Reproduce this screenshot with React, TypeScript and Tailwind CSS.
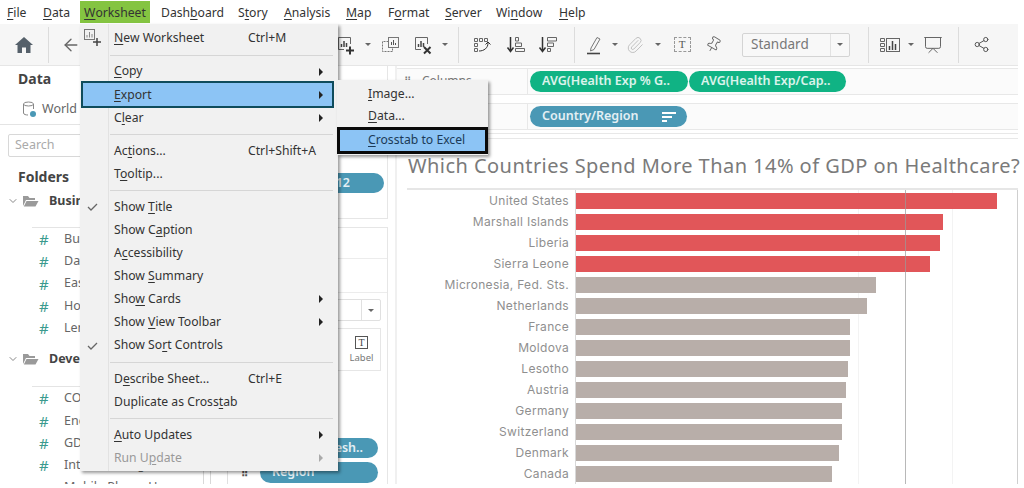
import { ArrowLeft, ChevronDown, Paperclip, Pin, Presentation, Share2 } from "lucide-react";
import type { ReactNode } from "react";

// "&" marks the underlined mnemonic letter
const Mn = ({ text }: { text: string }) => {
  const i = text.indexOf("&");
  if (i < 0) return <>{text}</>;
  return (
    <>
      {text.slice(0, i)}
      <u className="underline-offset-2">{text[i + 1]}</u>
      {text.slice(i + 2)}
    </>
  );
};

const topMenus = [
  { label: "&File", w: "w-[36px]" },
  { label: "&Data", w: "w-[37px]" },
  { label: "&Worksheet", w: "w-[70px] mr-[11px] justify-center bg-[#84c441]" },
  { label: "Dash&board", w: "w-[77px]" },
  { label: "S&tory", w: "w-[46px]" },
  { label: "&Analysis", w: "w-[62px]" },
  { label: "&Map", w: "w-[42px]" },
  { label: "F&ormat", w: "w-[57px]" },
  { label: "&Server", w: "w-[51px]" },
  { label: "Wi&ndow", w: "w-[63px]" },
  { label: "&Help", w: "w-[40px]" },
];

type MenuEntry = {
  label?: string;
  shortcut?: string;
  arrow?: boolean;
  check?: boolean;
  active?: boolean;
  disabled?: boolean;
  icon?: boolean;
  sep?: boolean;
};

const worksheetMenu: MenuEntry[] = [
  { label: "&New Worksheet", shortcut: "Ctrl+M", icon: true },
  { sep: true },
  { label: "&Copy", arrow: true },
  { label: "&Export", arrow: true, active: true },
  { label: "C&lear", arrow: true },
  { sep: true },
  { label: "Ac&tions...", shortcut: "Ctrl+Shift+A" },
  { label: "T&ooltip..." },
  { sep: true },
  { label: "Show &Title", check: true },
  { label: "Show C&aption" },
  { label: "A&ccessibility" },
  { label: "Show &Summary" },
  { label: "Sho&w Cards", arrow: true },
  { label: "Show &View Toolbar", arrow: true },
  { label: "Show So&rt Controls", check: true },
  { sep: true },
  { label: "D&escribe Sheet...", shortcut: "Ctrl+E" },
  { label: "Duplicate as Cross&tab" },
  { sep: true },
  { label: "&Auto Updates", arrow: true },
  { label: "Run U&pdate", arrow: true, disabled: true },
];

const bars = [
  { name: "United States", end: 997, red: true },
  { name: "Marshall Islands", end: 943, red: true },
  { name: "Liberia", end: 940, red: true },
  { name: "Sierra Leone", end: 930, red: true },
  { name: "Micronesia, Fed. Sts.", end: 876 },
  { name: "Netherlands", end: 867 },
  { name: "France", end: 850 },
  { name: "Moldova", end: 850 },
  { name: "Lesotho", end: 848 },
  { name: "Austria", end: 846 },
  { name: "Germany", end: 842 },
  { name: "Switzerland", end: 842 },
  { name: "Denmark", end: 839 },
  { name: "Canada", end: 832 },
];

const Caret = () => <span className="h-0 w-0 shrink-0 border-x-[3px] border-t-[3px] border-x-transparent border-t-[#666]" />;

const Divider = () => <span className="block h-[36px] w-px bg-[#dcdcdc]" />;

const Slot = ({ w, children }: { w: string; children?: ReactNode }) => (
  <span className={`flex shrink-0 items-center justify-center ${w}`}>{children}</span>
);

const HomeIcon = () => (
  <svg width="18" height="16" viewBox="0 0 18 16" fill="#55606a">
    <path d="M9 0 L18 8 L15.5 8 L15.5 16 L11 16 L11 10.5 L7 10.5 L7 16 L2.5 16 L2.5 8 L0 8 Z" />
  </svg>
);

const ChartBox = ({ mark }: { mark?: "plus" | "x" }) => (
  <svg width="22" height="20" viewBox="0 0 22 20" fill="none" stroke="#666">
    <path d="M4.5 2.5 H16.5 V9 M4.5 2.5 V14.5 H10" />
    <path d="M7.5 12 V9 M10 12 V6 M12.5 12 V8" stroke="#444" strokeWidth="1.5" />
    {mark === "plus" && <path d="M12 15.5 H20 M16 11.5 V19.5" stroke="#333" strokeWidth="2" />}
    {mark === "x" && <path d="M13 12 L19.5 18.5 M19.5 12 L13 18.5" stroke="#333" strokeWidth="2" />}
  </svg>
);

const DuplicateChart = () => (
  <svg width="20" height="20" viewBox="0 0 20 20" fill="none" stroke="#777">
    <rect x="8.5" y="2.5" width="10" height="10" />
    <path d="M8.5 6.5 H2.5 V16.5 H12.5 V12.5" strokeDasharray="2 1" />
    <path d="M11.5 10 V7 M13.5 10 V5 M15.5 10 V8" stroke="#555" />
  </svg>
);

const SwapIcon = () => (
  <svg width="20" height="20" viewBox="0 0 20 20" fill="none" stroke="#666">
    <path d="M2.5 3.5 h3 v3 h-3 z M7.5 3.5 h3 v3 h-3 z M12.5 3.5 h3 v3 h-3 z M2.5 8.5 h3 v3 h-3 z M2.5 13.5 h3 v3 h-3 z" />
    <path d="M7 16 C12 16 16 13 16 8" stroke="#333" />
    <path d="M13.5 9.5 L16 7 L18.5 9.5" stroke="#333" />
  </svg>
);

const SortIcon = ({ desc }: { desc?: boolean }) => (
  <svg width="20" height="20" viewBox="0 0 20 20" fill="none" stroke="#666">
    <path d="M4.5 2 V16 M1.5 12.5 L4.5 16.5 L7.5 12.5" stroke="#333" strokeWidth="1.5" />
    {desc ? (
      <path d="M9.5 2.5 h9 v3.5 h-9 z M9.5 8 h6 v3.5 h-6 z M9.5 13.5 h3 v3 h-3 z" />
    ) : (
      <path d="M9.5 2.5 h3 v3.5 h-3 z M9.5 8 h6 v3.5 h-6 z M9.5 13.5 h9 v3 h-9 z" />
    )}
  </svg>
);

const PenIcon = () => (
  <svg width="18" height="20" viewBox="0 0 18 20" fill="none" stroke="#777">
    <path d="M5 13 L11 2.5 L14 4 L8 14.5 L4.5 16 Z" />
    <path d="M1 18.5 H14" stroke="#444" strokeWidth="1.6" />
  </svg>
);

const ShowMeIcon = () => (
  <svg width="22" height="18" viewBox="0 0 22 18" fill="none" stroke="#666">
    <path d="M1.5 2.5 h4 v3 h-4 z M1.5 7.5 h4 v3 h-4 z M1.5 12.5 h4 v3 h-4 z" />
    <rect x="7.5" y="2.5" width="13" height="13" />
    <path d="M10.5 14 V10 M13.5 14 V5 M16.5 14 V8" stroke="#444" strokeWidth="1.5" />
  </svg>
);

const Pill = ({ text, cls, children }: { text: string; cls: string; children?: ReactNode }) => (
  <div className={`flex h-[20px] items-center rounded-full text-[12.5px] font-semibold text-white/85 ${cls}`}>
    <span className="truncate">{text}</span>
    {children}
  </div>
);

const FieldRow = ({ name }: { name: string }) => (
  <div className="flex h-[22.3px] items-center pl-[39px] text-[12.5px] text-[#666]">
    <span className="w-[25px] text-[15px] text-[#3a9a8e]">#</span>
    <span className="whitespace-nowrap">{name}</span>
  </div>
);

const FolderHead = ({ name }: { name: string }) => (
  <div className="flex h-[26px] items-center gap-[3px] pl-[7px] text-[12.5px] font-bold text-[#444]">
    <ChevronDown size={12} color="#888" />
    <svg width="17" height="12" viewBox="0 0 17 12" fill="#9a9a9a">
      <path d="M1 1 H6 L7.5 3 H13 V5 H4 L1 11 Z M4.5 6 H16.5 L13.5 11.5 H1.8 Z" />
    </svg>
    <span className="ml-[7px]">{name}</span>
  </div>
);

const DataPane = () => (
  <aside className="h-full w-[203px] shrink-0 overflow-hidden">
    <div className="flex h-[23px] items-end pl-[18px] text-[14px] font-bold text-[#444]">Data</div>
    <div className="flex h-[36px] items-center gap-[5px] border-b border-[#e4e4e4] pl-[22px] pt-[5px] text-[12.5px] text-[#666]">
      <svg width="15" height="17" viewBox="0 0 15 17" fill="none" stroke="#888">
        <ellipse cx="6.5" cy="3" rx="5" ry="2" />
        <path d="M1.5 3 V12 C1.5 13.5 4 14 6 14 M11.5 3 V8" />
        <circle cx="11" cy="13" r="3" fill="#4a98b5" stroke="none" />
      </svg>
      <span className="whitespace-nowrap">World Indicators</span>
    </div>
    <div className="mx-[8px] mt-[9px] flex h-[23px] items-center rounded-[2px] border border-[#d8d8d8] pl-[6px] text-[12.5px] text-[#aaa]">
      Search
    </div>
    <div className="mt-[10px] pl-[18px] text-[14px] font-bold leading-[20px] text-[#444]">Folders</div>
    <div className="mt-[1px]">
      <FolderHead name="Business" />
    </div>
    <div className="ml-[32px] mt-[13px] h-px bg-[#e4e4e4]" />
    <FieldRow name="Business Tax Rate" />
    <FieldRow name="Days to Start Business" />
    <FieldRow name="Ease of Business" />
    <FieldRow name="Hours to do Tax" />
    <FieldRow name="Lending Interest" />
    <div className="mt-[7px]">
      <FolderHead name="Development" />
    </div>
    <div className="ml-[32px] mt-[14px] h-px bg-[#e4e4e4]" />
    <FieldRow name="CO2 Emissions" />
    <FieldRow name="Energy Usage" />
    <FieldRow name="GDP" />
    <FieldRow name="Internet Usage" />
    <FieldRow name="Mobile Phone Usage" />
  </aside>
);

const CardsPane = () => (
  <div className="ml-[16px] flex h-full w-[161px] shrink-0 flex-col border-l border-[#e0e0e0]">
    <div className="h-[153px] shrink-0 border-b border-r border-[#e6e6e6] pl-[8px] pr-[3px] pt-[107px]">
      <Pill text="YEAR(Year): 2012" cls="justify-end bg-[#4a98b5] pr-[34px]" />
    </div>
    <div className="mt-[8px] flex flex-1 flex-col border-r border-t border-[#e6e6e6]">
      <div className="h-[31px] shrink-0 border-b border-[#ececec]" />
      <div className="h-[34px] shrink-0 border-b border-[#ececec]" />
      <div className="ml-auto mr-[6px] mt-[6px] flex h-[22px] w-[150px] shrink-0 justify-end rounded-[2px] border border-[#e0e0e0]">
        <span className="flex w-[19px] items-center justify-center border-l border-[#e0e0e0]">
          <Caret />
        </span>
      </div>
      <div className="ml-auto mr-[6px] mt-[7px] flex h-[43px] w-[150px] shrink-0 justify-end border border-[#e6e6e6]">
        <div className="flex w-[37px] flex-col items-center justify-center gap-[4px] text-[9.5px] text-[#777]">
          <span className="flex h-[13px] w-[13px] items-center justify-center border border-[#555] font-['Liberation_Serif'] text-[10px] leading-none text-[#444]">
            T
          </span>
          <span className="leading-none">Label</span>
        </div>
      </div>
      <div className="ml-[33px] mr-[9px] mt-[67px]">
        <Pill text="Pop. Fresh.." cls="justify-end bg-[#4a98b5] pr-[15px]" />
      </div>
      <div className="ml-[13px] mr-[9px] mt-[4px] flex items-center gap-[4px]">
        <span className="w-[15px] text-[10px] font-bold leading-none tracking-[1px] text-[#555]">⠿</span>
        <div className="flex-1">
          <Pill text="Region" cls="h-[21px] bg-[#4a98b5] pl-[12px]" />
        </div>
      </div>
    </div>
  </div>
);

const Shelf = ({ label, children }: { label: string; children: ReactNode }) => (
  <div className="flex h-[27px] items-center border-y border-[#e8e8e8] bg-[#fbfbfb]">
    <div className="flex h-full w-[131px] shrink-0 items-start gap-[11px] border-r border-[#e8e8e8] pl-[7px] pt-[3px] text-[12px] text-[#777]">
      <span className="text-[10px] leading-[16px]">⠿</span>
      {label}
    </div>
    <div className="flex items-center gap-px pl-[2px]">{children}</div>
  </div>
);

const Chart = () => (
  <div className="relative ml-[10px] mt-[8px] border-t-2 border-[#e6e6e6]">
    <div className="absolute bottom-0 left-[451px] top-0 w-px bg-[#f3f3f3]" />
    <div className="absolute bottom-0 left-[545px] top-0 w-px bg-[#f3f3f3]" />
    <div className="absolute bottom-0 right-0 top-0 w-px bg-[#cfcfcf]" />
    {bars.map((b) => (
      <div key={b.name} className="relative flex h-[21px] items-center">
        <span className="w-[168px] shrink-0 whitespace-nowrap pr-[6px] text-right font-['Inter',sans-serif] text-[12px] tracking-[0.3px] text-[#8f8f8f]">
          {b.name}
        </span>
        <div className="flex h-full flex-1 items-center border-l border-[#d8d8d8]">
          <div
            className={`h-[16px] ${b.red ? "bg-[#e15659]" : "bg-[#b8aea9]"}`}
            style={{ width: b.end - 576 }}
          />
        </div>
      </div>
    ))}
    <div className="absolute bottom-0 left-[498px] top-0 w-px bg-[#9a9a9a]/70" />
  </div>
);

const MenuRow = ({ item }: { item: MenuEntry }) => (
  <div
    className={`relative flex items-center ${item.disabled ? "text-[#999]" : "text-[#333]"} ${
      item.active
        ? "z-10 -my-[2px] ml-[1px] h-[27px] w-[253px] shrink-0 border-2 border-[#0f4c5c] bg-[#8cc4f5] pl-[31px] pr-[9px] text-[#1b3a57]"
        : "h-[23.1px] shrink-0 pl-[34px] pr-[15px]"
    }`}
  >
    {item.icon && (
      <svg className="absolute left-[3px] top-[1px]" width="20" height="18" viewBox="0 0 20 18" fill="none" stroke="#777">
        <rect x="1.5" y="1.5" width="10" height="10" />
        <path d="M4 9.5 V7 M6.5 9.5 V4 M9 9.5 V6" stroke="#888" />
        <path d="M10 14 H18 M14 10 V18" stroke="#444" strokeWidth="1.5" />
      </svg>
    )}
    {item.check && (
      <svg className="absolute left-[7px] top-[8px]" width="11" height="8" viewBox="0 0 11 8" fill="none" stroke="#666" strokeWidth="1.3">
        <path d="M1 4 L4 7 L10 1" />
      </svg>
    )}
    <span className="w-[134px] shrink-0 whitespace-nowrap">
      <Mn text={item.label ?? ""} />
    </span>
    {item.shortcut && <span className="whitespace-nowrap">{item.shortcut}</span>}
    {item.arrow && (
      <span
        className={`ml-auto h-0 w-0 border-y-[4px] border-l-[4px] border-y-transparent ${
          item.disabled ? "border-l-[#aaa]" : "border-l-[#222]"
        }`}
      />
    )}
  </div>
);

const WorksheetMenu = () => (
  <div className="absolute left-[80px] top-[24px] flex h-[447px] w-[258px] flex-col bg-[#f1f1f1] pt-[3px] text-[12.2px] shadow-[2px_2px_3px_rgba(0,0,0,0.4)]">
    <div className="absolute bottom-0 left-[28px] top-0 w-px bg-[#e2e2e2]" />
    {worksheetMenu.map((item, i) =>
      item.sep ? (
        <div key={i} className="relative my-[4.5px] ml-[30px] mr-[5px] h-px shrink-0 bg-[#d6d6d6]" />
      ) : (
        <MenuRow key={i} item={item} />
      ),
    )}
  </div>
);

const ExportSubmenu = () => (
  <div className="absolute left-[337px] top-[80px] z-20 flex h-[75px] w-[151px] flex-col bg-[#f1f1f1] pt-[3px] text-[12.2px] text-[#333] shadow-[2px_2px_3px_rgba(0,0,0,0.4)]">
    <div className="flex h-[22px] items-center pl-[31px]">
      <Mn text="&Image..." />
    </div>
    <div className="flex h-[22px] items-center pl-[31px]">
      <Mn text="&Data..." />
    </div>
    <div className="flex h-[27px] items-center border-[3px] border-[#0a0a0a] bg-[#8cc4f5] pl-[28px] text-[#1b3a57]">
      <Mn text="&Crosstab to Excel" />
    </div>
  </div>
);

export default function App() {
  return (
    <div className="relative h-[488px] w-[1024px] overflow-hidden bg-white font-['Noto_Sans',sans-serif]">
      {/* menu bar */}
      <div className="flex h-[24px] items-stretch pb-px pl-[7px] pt-px text-[12.2px] text-[#333]">
        {topMenus.map((m) => (
          <div key={m.label} className={`flex items-center pt-[2px] ${m.w}`}>
            <Mn text={m.label} />
          </div>
        ))}
      </div>

      {/* toolbar */}
      <div className="flex h-[42px] w-[1018px] items-center border-b border-[#e6e6e6] bg-[#f6f6f6] text-[#666]">
        <Slot w="w-[48px]">
          <HomeIcon />
        </Slot>
        <Divider />
        <Slot w="w-[44px]">
          <ArrowLeft size={20} strokeWidth={1.6} color="#666" />
        </Slot>
        <span className="w-[241px] shrink-0" />
        <Slot w="w-[22px]">
          <ChartBox mark="plus" />
        </Slot>
        <Slot w="w-[24px]">
          <Caret />
        </Slot>
        <Slot w="w-[20px]">
          <DuplicateChart />
        </Slot>
        <Slot w="w-[44px]">
          <ChartBox mark="x" />
        </Slot>
        <Slot w="w-[2px]">
          <Caret />
        </Slot>
        <span className="ml-[12px]">
          <Divider />
        </span>
        <Slot w="w-[46px]">
          <SwapIcon />
        </Slot>
        <Slot w="w-[22px]">
          <SortIcon />
        </Slot>
        <Slot w="w-[42px]">
          <SortIcon desc />
        </Slot>
        <span className="ml-[5px]">
          <Divider />
        </span>
        <Slot w="w-[40px]">
          <PenIcon />
        </Slot>
        <Slot w="w-0">
          <Caret />
        </Slot>
        <Slot w="w-[40px]">
          <Paperclip size={18} strokeWidth={1.2} color="#bbb" />
        </Slot>
        <Slot w="w-[6px]">
          <Caret />
        </Slot>
        <Slot w="w-[42px]">
          <span className="flex h-[15px] w-[17px] items-center justify-center border border-dashed border-[#999] font-['Liberation_Serif'] text-[11px] leading-none text-[#555]">
            T
          </span>
        </Slot>
        <Slot w="w-[20px]">
          <Pin size={17} strokeWidth={1.3} color="#666" className="rotate-[30deg]" />
        </Slot>
        <div className="ml-[19px] flex h-[24px] w-[108px] shrink-0 items-center rounded-[2px] border border-[#d4d4d4] bg-[#f8f8f8] pl-[8px] text-[13.5px] text-[#777]">
          <span className="flex-1">Standard</span>
          <span className="flex h-full w-[19px] items-center justify-center border-l border-[#e2e2e2]">
            <Caret />
          </span>
        </div>
        <span className="ml-[18px]">
          <Divider />
        </span>
        <Slot w="w-[42px]">
          <ShowMeIcon />
        </Slot>
        <Slot w="w-0">
          <Caret />
        </Slot>
        <Slot w="w-[44px]">
          <Presentation size={20} strokeWidth={1.2} color="#666" />
        </Slot>
        <span className="ml-[3px]">
          <Divider />
        </span>
        <Slot w="w-[44px]">
          <Share2 size={17} strokeWidth={1.4} color="#555" />
        </Slot>
      </div>

      {/* workspace */}
      <div className="flex h-[418px] w-[1024px] overflow-hidden">
        <DataPane />
        <div className="h-full w-[8px] shrink-0 border-x border-[#d8d8d8]" />
        <CardsPane />
        <main className="ml-[7px] w-[623px] shrink-0 border-l-2 border-[#f0f0f0]">
          <div className="mt-[2px] flex flex-col gap-[8px]">
            <Shelf label="Columns">
              <Pill text="AVG(Health Exp % G.." cls="h-[21px] w-[158px] bg-[#10b384] pl-[12px]" />
              <Pill text="AVG(Health Exp/Cap.." cls="h-[21px] w-[157px] bg-[#10b384] pl-[12px]" />
            </Shelf>
            <Shelf label="Rows">
              <Pill text="Country/Region" cls="h-[21px] w-[157px] justify-between bg-[#4a98b5] pl-[12px] pr-[11px]">
                <svg width="14" height="10" viewBox="0 0 14 10" fill="#fff">
                  <path d="M0 0 H14 V2 H0 Z M0 4 H10 V6 H0 Z M0 8 H5 V10 H0 Z" />
                </svg>
              </Pill>
            </Shelf>
          </div>
          <div className="mt-[3px] h-[6px] border-y border-[#e8e8e8]" />
          <h1 className="ml-[11px] mt-[13px] whitespace-nowrap text-[20px] font-normal leading-[28px] tracking-[0.45px] text-[#7a7a7a]">
            Which Countries Spend More Than 14% of GDP on Healthcare?
          </h1>
          <Chart />
        </main>
      </div>

      <WorksheetMenu />
      <ExportSubmenu />
    </div>
  );
}
